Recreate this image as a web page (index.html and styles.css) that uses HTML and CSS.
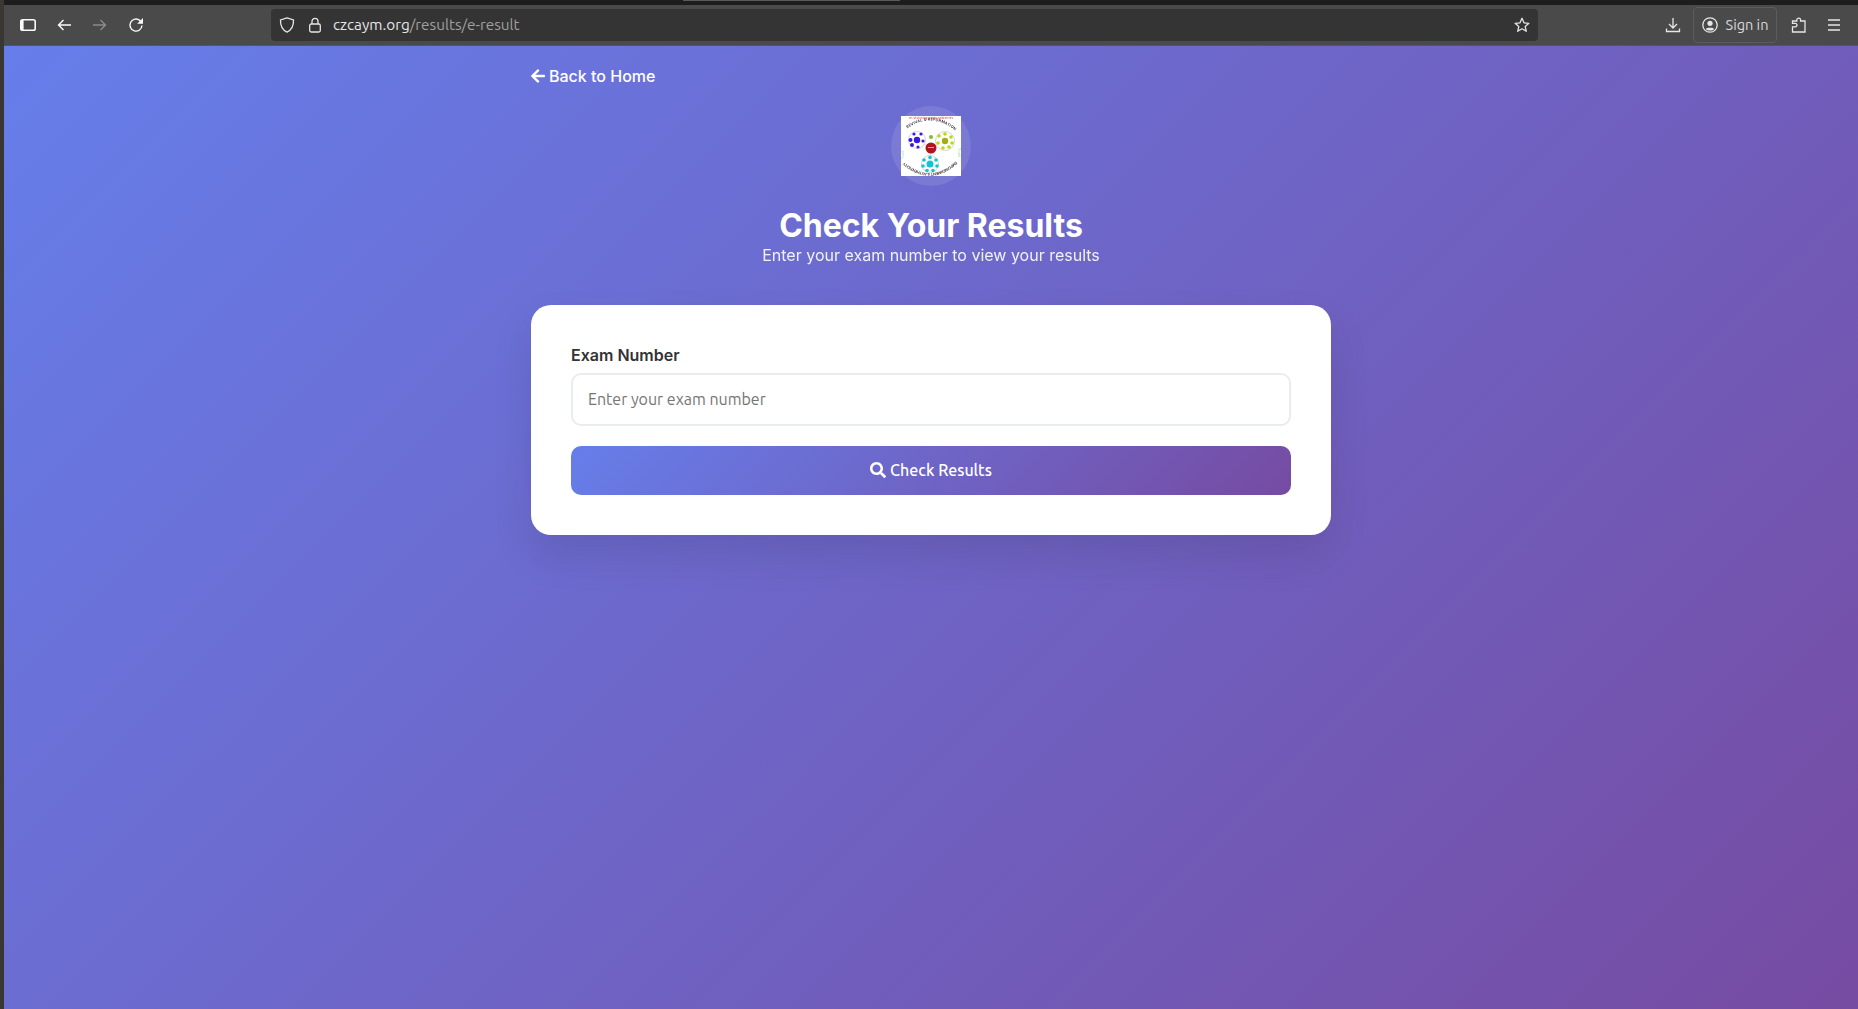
FILE: index.html
```html
<!DOCTYPE html>
<html lang="en">
<head>
    <meta charset="UTF-8">
    <meta name="viewport" content="width=device-width, initial-scale=1.0">
    <title>Check Your Results</title>
    <link rel="stylesheet" href="styles.css">
</head>
<body>
    <div class="window-top"><span class="active-tab"></span></div>

    <div class="toolbar">
        <div class="nav-buttons">
            <svg class="icon" viewBox="0 0 16 16"><rect x="0.8" y="2.8" width="14.400" height="10.400" rx="1.800" fill="none" stroke="#fbfbfe" stroke-width="1.600"/><rect x="1" y="3" width="2.600" height="10" fill="#fbfbfe"/></svg>
            <svg class="icon" viewBox="0 0 16 16"><path d="M15 8H2.500M7.500 3 2.500 8l5 5" fill="none" stroke="#fbfbfe" stroke-width="1.400"/></svg>
            <svg class="icon" viewBox="0 0 16 16"><path d="M1 8h12.500M8.500 3l5 5-5 5" fill="none" stroke="#8a8a8a" stroke-width="1.400"/></svg>
            <svg class="icon" viewBox="0 0 16 16"><path d="M14 8.500A6 6 0 1 1 11.800 3.400L14 5.600" fill="none" stroke="#fbfbfe" stroke-width="1.400"/><path d="M15 1v5.800H9.200z" fill="#fbfbfe"/></svg>
        </div>

        <div class="url-bar">
            <svg class="icon" viewBox="0 0 16 16"><path d="M8 .9 14.500 3c.2 5.800-1.600 9.800-6.500 12.100C3.100 12.800 1.300 8.800 1.500 3z" fill="none" stroke="#e6e6e8" stroke-width="1.300"/></svg>
            <svg class="icon lock" viewBox="0 0 16 16"><rect x="2.700" y="7" width="10.600" height="8" rx="1.500" fill="none" stroke="#e6e6e8" stroke-width="1.300"/><path d="M5 7V4.300a3 3 0 0 1 6 0V7" fill="none" stroke="#e6e6e8" stroke-width="1.300"/></svg>
            <span class="url-text">czcaym.org<span class="url-path">/results/e-result</span></span>
            <svg class="icon star" viewBox="0 0 16 16"><path d="m8 1.300 2 4.500 4.900.5-3.700 3.200 1.100 4.800L8 11.800l-4.300 2.500 1.100-4.800L1.100 6.300 6 5.800z" fill="none" stroke="#e6e6e8" stroke-width="1.300" stroke-linejoin="round"/></svg>
        </div>

        <div class="toolbar-right">
            <svg class="icon" viewBox="0 0 16 16"><path d="M8 1v9.500M4 7l4 4 4-4M1.500 11.500v3h13v-3" fill="none" stroke="#e6e6e8" stroke-width="1.300"/></svg>
            <div class="sign-in">
                <svg class="icon" viewBox="0 0 16 16"><circle cx="8" cy="8" r="7.200" fill="none" stroke="#e6e6e8" stroke-width="1.300"/><circle cx="8" cy="6.300" r="2.600" fill="#e6e6e8"/><path d="M3.800 12c1-1.600 7.400-1.600 8.400 0-1.500 2-6.900 2-8.400 0z" fill="#e6e6e8"/></svg>
                <span class="sign-in-text">Sign in</span>
            </div>
            <svg class="icon puzzle" viewBox="0 0 16 16"><path d="M1.500 15V9.800h2.800a1.700 1.700 0 0 0 0-3.400H1.500V4h4.300V3a1.900 1.900 0 0 1 3.800 0v1h4.400v11z" fill="none" stroke="#e6e6e8" stroke-width="1.300"/></svg>
            <svg class="icon menu" viewBox="0 0 16 16"><path d="M2 3h12M2 8h12M2 13h12" fill="none" stroke="#e6e6e8" stroke-width="1.300"/></svg>
        </div>
    </div>

    <div class="page">
        <div class="container">
            <a class="back-link" href="#">
                <svg class="back-arrow" viewBox="0 0 448 512"><path fill="#fff" d="M257.500 445.100l-22.200 22.200c-9.400 9.400-24.600 9.400-33.900 0L7 273c-9.400-9.400-9.400-24.600 0-33.900L201.400 44.700c9.400-9.400 24.600-9.400 33.900 0l22.200 22.200c9.500 9.500 9.300 25-.4 34.300L136.600 216H424c13.300 0 24 10.700 24 24v32c0 13.300-10.700 24-24 24H136.600l120.500 114.800c9.800 9.300 10 24.800.4 34.300z"/></svg>
                Back to Home
            </a>

            <div class="logo-ring">
                <svg class="logo" viewBox="0 0 60 60">
                    <defs>
                        <path id="logo-arc-top" d="M3 15Q30-7 57 17"/>
                        <path id="logo-arc-bottom" d="M57 43Q30 70 2 45"/>
                    </defs>
                    <rect width="60" height="60" fill="#fff"/>
                    <text class="logo-motto" x="30" y="3" text-anchor="middle" textLength="44">re-Visioning Youth Ministries</text>
                    <text class="logo-arc"><textPath href="#logo-arc-top" startOffset="4" textLength="52">REVIVAL &amp; REFORMATION</textPath></text>
                    <text class="logo-arc"><textPath href="#logo-arc-bottom" startOffset="3" textLength="58">EMPOWERMENT &amp; AUTHENTICITY</textPath></text>
                    <text class="logo-side" transform="translate(3 43) rotate(-90)">Youth</text>
                    <text class="logo-side" transform="translate(57 32) rotate(90)">Youth</text>
                    <path d="M16 24 30 32M44 24 30 32M29 48 30 32" stroke="#ddd" stroke-width="0.800"/>
                    <circle cx="16" cy="24" r="8.500" fill="#fff" stroke="#bbb" stroke-width="0.600"/>
                    <circle cx="16" cy="24" r="3.200" fill="#3a18e0"/>
                    <circle cx="9.500" cy="24" r="2" fill="#3a18e0"/>
                    <circle cx="13" cy="18" r="1.600" fill="#3a18e0"/>
                    <circle cx="20" cy="18" r="1.600" fill="#3a18e0"/>
                    <circle cx="22" cy="25" r="1.600" fill="#3a18e0"/>
                    <circle cx="11" cy="29" r="2" fill="#3a18e0"/>
                    <circle cx="17" cy="31" r="1.600" fill="#3a18e0"/>
                    <circle cx="30" cy="21" r="2" fill="#7cc22e"/>
                    <circle cx="44" cy="25" r="9.500" fill="#fff" stroke="#bbb" stroke-width="0.600"/>
                    <circle cx="44" cy="25" r="3.200" fill="#a4ad10"/>
                    <circle cx="38" cy="20" r="1.800" fill="#b7d90f"/>
                    <circle cx="44" cy="18" r="1.800" fill="#b7d90f"/>
                    <circle cx="50" cy="21" r="1.800" fill="#b7d90f"/>
                    <circle cx="51" cy="27" r="1.800" fill="#b7d90f"/>
                    <circle cx="48" cy="31" r="1.800" fill="#b7d90f"/>
                    <circle cx="42" cy="32" r="1.800" fill="#b7d90f"/>
                    <circle cx="37" cy="27" r="1.800" fill="#b7d90f"/>
                    <circle cx="29" cy="48" r="8.500" fill="#fff" stroke="#bbb" stroke-width="0.600"/>
                    <circle cx="29" cy="48" r="3.500" fill="#14c4d4"/>
                    <circle cx="29" cy="41.500" r="1.800" fill="#14c4d4"/>
                    <circle cx="35" cy="44" r="1.800" fill="#14c4d4"/>
                    <circle cx="36" cy="50" r="1.800" fill="#14c4d4"/>
                    <circle cx="32" cy="54.500" r="1.800" fill="#14c4d4"/>
                    <circle cx="26" cy="54.500" r="1.800" fill="#14c4d4"/>
                    <circle cx="22" cy="50" r="1.800" fill="#14c4d4"/>
                    <circle cx="23" cy="44" r="1.800" fill="#14c4d4"/>
                    <circle cx="30" cy="32" r="5.500" fill="#b0141e"/>
                    <rect x="27" y="31" width="6" height="1" fill="#e8a0a0"/>
                </svg>
            </div>

            <h1 class="title">Check Your Results</h1>
            <p class="subtitle">Enter your exam number to view your results</p>

            <form class="card">
                <label class="field-label" for="exam-number">Exam Number</label>
                <input class="field-input" id="exam-number" type="text" placeholder="Enter your exam number">
                <button class="submit-btn" type="button">
                    <svg class="search-icon" viewBox="0 0 512 512"><path fill="#fff" d="M505 442.700L405.300 343c-4.500-4.500-10.600-7-17-7H372c27.600-35.300 44-79.700 44-128C416 93.100 322.900 0 208 0S0 93.100 0 208s93.100 208 208 208c48.300 0 92.700-16.400 128-44v16.300c0 6.400 2.500 12.500 7 17l99.700 99.700c9.400 9.400 24.600 9.400 33.900 0l28.300-28.300c9.400-9.400 9.400-24.600.1-34zM208 336c-70.700 0-128-57.200-128-128 0-70.700 57.200-128 128-128 70.700 0 128 57.200 128 128 0 70.700-57.200 128-128 128z"/></svg>
                    Check Results
                </button>
            </form>
        </div>
    </div>
</body>
</html>
```

FILE: styles.css
```css
* {
    box-sizing: border-box;
}

html, body {
    height: 100%;
}

body {
    margin: 0;
    padding-left: 4px;
    display: flex;
    flex-direction: column;
    overflow: hidden;
    background-color: #3a3631;
    font-family: Inter, sans-serif;
}

.window-top {
    height: 5px;
    flex: none;
    padding-left: 679px;
    background-color: #1d1d1d;
}

.active-tab {
    display: block;
    width: 217px;
    height: 1px;
    background-color: #5a5a5a;
}

.toolbar {
    height: 41px;
    flex: none;
    display: flex;
    align-items: center;
    background-color: #4a4a4a;
    border-bottom: 1px solid #565656;
    font-family: Ubuntu, "Noto Sans", sans-serif;
    color: #e6e6e8;
}

.icon {
    width: 16px;
    height: 16px;
    flex: none;
}

.nav-buttons {
    width: 267px;
    padding-left: 16px;
    display: flex;
    align-items: center;
    gap: 20px;
}

.url-bar {
    width: 1267px;
    height: 32px;
    display: flex;
    align-items: center;
    padding-left: 8px;
    border-radius: 4px;
    background-color: #343434;
    font-size: 15.3px;
}

.lock {
    margin-left: 12px;
}

.url-text {
    margin-left: 10px;
    padding-bottom: 2px;
    flex: 1;
}

.url-path {
    color: #a0a0a0;
}

.star {
    margin-right: 8px;
}

.toolbar-right {
    flex: 1;
    display: flex;
    align-items: center;
    padding-left: 127px;
    font-size: 14.5px;
}

.sign-in {
    height: 36px;
    width: 84px;
    margin-left: 12px;
    display: flex;
    align-items: center;
    justify-content: center;
    gap: 8px;
    border: 1px solid #5c5c5c;
    border-radius: 4px;
    color: #d8d8dc;
    white-space: nowrap;
}

.sign-in-text {
    padding-bottom: 2px;
}

.puzzle {
    margin-left: 14px;
}

.menu {
    margin-left: 19px;
}

.page {
    flex: 1;
    padding-top: 18px;
    background: linear-gradient(135deg, #667eea 0%, #764ba2 100%);
}

.container {
    width: 800px;
    margin: 0 auto;
    display: flex;
    flex-direction: column;
    align-items: center;
    color: #fff;
}

.back-link {
    align-self: flex-start;
    display: flex;
    align-items: center;
    gap: 4px;
    height: 24px;
    color: #fff;
    font-size: 16px;
    font-weight: 500;
    text-decoration: none;
}

.back-arrow {
    width: 14px;
    height: 16px;
}

.logo-ring {
    width: 80px;
    height: 80px;
    margin-top: 18px;
    display: flex;
    align-items: center;
    justify-content: center;
    border-radius: 50%;
    background-color: rgba(255, 255, 255, 0.1);
}

.logo {
    width: 60px;
    height: 60px;
    filter: blur(0.35px);
}

.logo-motto {
    fill: #e0494f;
    font-size: 2.600px;
    font-weight: 600;
}

.logo-arc {
    fill: #333;
    font-size: 3.800px;
    font-weight: 600;
}

.logo-side {
    fill: #9be39b;
    font-size: 3.200px;
}

.title {
    margin: 20px 0 0;
    font-size: 32px;
    line-height: 40px;
    font-weight: 700;
}

.subtitle {
    margin: 0;
    font-size: 16px;
    line-height: 19px;
    opacity: 0.9;
}

.card {
    width: 800px;
    margin-top: 40px;
    padding: 40px;
    display: flex;
    flex-direction: column;
    border-radius: 20px;
    background-color: #fff;
    box-shadow: 0 20px 40px rgba(0, 0, 0, 0.1);
}

.field-label {
    margin-bottom: 7px;
    color: #333;
    font-size: 16px;
    line-height: 21px;
    font-weight: 600;
}

.field-input {
    height: 53px;
    padding: 0 15px 2px;
    border: 2px solid #e9ecef;
    border-radius: 10px;
    font-family: Ubuntu, "Noto Sans", sans-serif;
    font-size: 16px;
}

.field-input::placeholder {
    color: #757575;
}

.submit-btn {
    height: 49px;
    margin-top: 20px;
    padding: 0 0 2px;
    display: flex;
    align-items: center;
    justify-content: center;
    gap: 4px;
    border: none;
    border-radius: 10px;
    color: #fff;
    background: linear-gradient(135deg, #667eea 0%, #764ba2 100%);
    font-family: Ubuntu, "Noto Sans", sans-serif;
    font-size: 16px;
    font-weight: 500;
}

.search-icon {
    width: 16px;
    height: 16px;
}
```
